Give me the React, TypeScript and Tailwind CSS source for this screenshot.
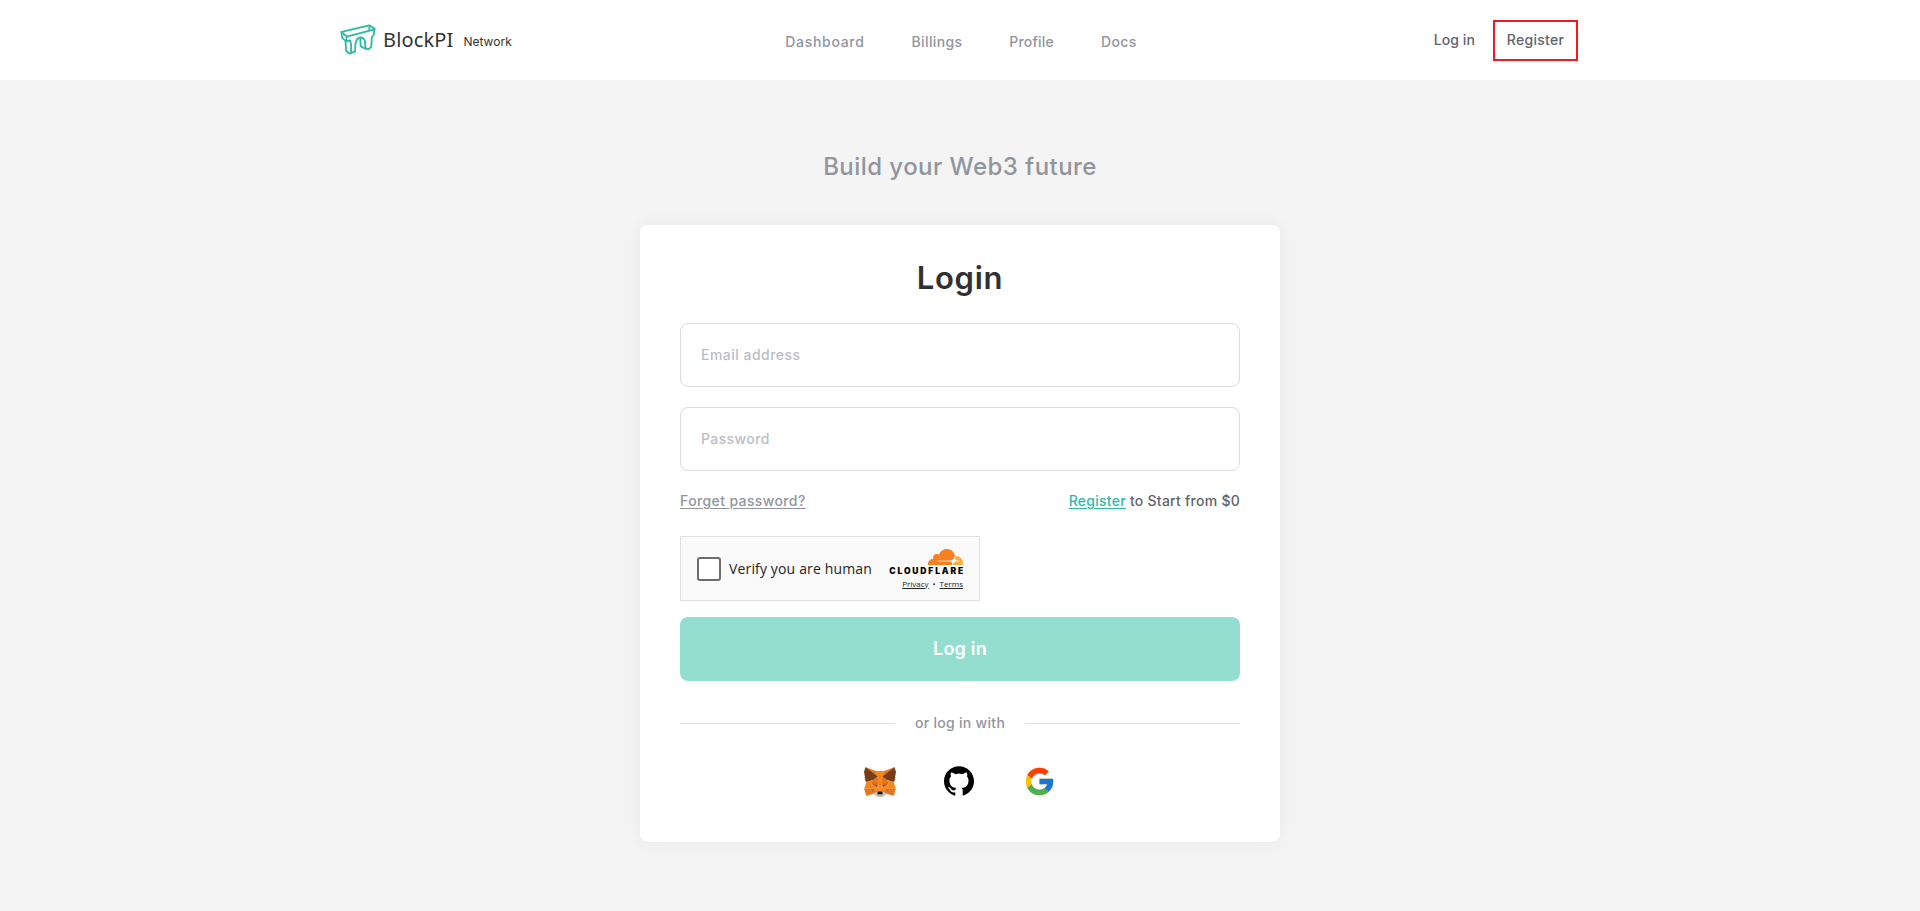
import { SiGithub } from "react-icons/si";
import { FcGoogle } from "react-icons/fc";

function BlockPiMark() {
  return (
    <svg viewBox="28 42 108 94" className="-mt-[2px] h-[31px] w-9" fill="none" stroke="#2cbba2" strokeWidth="5.5" strokeLinejoin="round" strokeLinecap="round">
      <path d="M32 66 L116 46 L132 56 L130 74 L124 82 L122 112 L113 119 L105 116 L103 95" />
      <path d="M32 66 L34 84 L44 93 L46 123 L56 132 L73 126 L74 104 Q77 84 89 83 Q100 82 103 95" />
      <path d="M32 66 L48 80 L132 58 M48 80 L46 94 L58 92 L61 104 L61 128" />
      <path d="M117 48 L116 60 M89 84 L90 109 L104 117" />
    </svg>
  );
}

function CloudflareMark() {
  return (
    <svg viewBox="0 6.56 24 10.87" className="h-4 w-[35px]">
      <path fill="#f6821f" d="M16.5088 16.8447c.1475-.5068.0908-.9707-.1553-1.3154-.2246-.3164-.6045-.499-1.0615-.5205l-8.6592-.1123a.1559.1559 0 0 1-.1333-.0713c-.0283-.042-.0351-.0986-.021-.1553.0278-.084.1123-.1484.2036-.1562l8.7359-.1123c1.0351-.0489 2.1601-.8868 2.5537-1.9136l.499-1.3013c.0215-.0561.0293-.1128.0147-.168-.5625-2.5463-2.835-4.4453-5.5499-4.4453-2.5039 0-4.6284 1.6177-5.3876 3.8614-.4927-.3658-1.1187-.5625-1.794-.499-1.2026.119-2.1665 1.083-2.2861 2.2856-.0283.31-.0069.6128.0635.894C1.5683 13.171 0 14.7754 0 16.752c0 .1748.0142.3515.0352.5273.0141.083.0844.1475.1689.1475h15.9814c.0909 0 .1758-.0645.2032-.1553l.12-.4268z" />
      <path fill="#fbad41" d="M19.2656 11.2813c-.0771 0-.1611 0-.2383.0112-.0566 0-.1054.0415-.127.0976l-.3378 1.1744c-.1475.5068-.0918.9707.1543 1.3164.2256.3164.6055.498 1.0625.5195l1.8437.1133c.0557 0 .1055.0263.1329.0703.0283.043.0351.1074.0214.1562-.0283.084-.1132.1485-.204.1553l-1.921.1123c-1.041.0488-2.1582.8867-2.5527 1.914l-.1406.3585c-.0283.0713.0215.1416.0986.1416h6.5977c.0771 0 .1474-.0489.169-.126.1122-.4082.1757-.837.1757-1.2803 0-2.6025-2.125-4.727-4.7344-4.727z" />
    </svg>
  );
}

const foxShapes: [string, string][] = [
  ["#e2761b", "274.1,35.5 174.6,109.4 193,65.8"],
  ["#e4761b", "44.4,35.5 143.1,110.1 125.6,65.8"],
  ["#e4761b", "238.3,206.8 211.8,247.4 268.5,263 284.8,207.7"],
  ["#e4761b", "33.9,207.7 50.1,263 106.8,247.4 80.3,206.8"],
  ["#e4761b", "103.6,138.2 87.8,162.1 144.1,164.6 142.1,104.1"],
  ["#e4761b", "214.9,138.2 175.9,103.4 174.6,164.6 230.8,162.1"],
  ["#e4761b", "106.8,247.4 140.6,230.9 111.4,208.1"],
  ["#e4761b", "177.9,230.9 211.8,247.4 207.1,208.1"],
  ["#d7c1b3", "211.8,247.4 177.9,230.9 180.6,253 180.3,262.3"],
  ["#d7c1b3", "106.8,247.4 138.3,262.3 138.1,253 140.6,230.9"],
  ["#233447", "138.8,193.5 110.6,185.2 130.5,176.1"],
  ["#233447", "179.7,193.5 188,176.1 208,185.2"],
  ["#cd6116", "106.8,247.4 111.6,206.8 80.3,207.7"],
  ["#cd6116", "207,206.8 211.8,247.4 238.3,207.7"],
  ["#cd6116", "230.8,162.1 174.6,164.6 179.8,193.5 188.1,176.1 208.1,185.2"],
  ["#cd6116", "110.6,185.2 130.6,176.1 138.8,193.5 144.1,164.6 87.8,162.1"],
  ["#e4751f", "87.8,162.1 111.4,208.1 110.6,185.2"],
  ["#e4751f", "208.1,185.2 207.1,208.1 230.8,162.1"],
  ["#e4751f", "144.1,164.6 138.8,193.5 145.4,227.6 146.9,182.7"],
  ["#e4751f", "174.6,164.6 171.9,182.6 173.1,227.6 179.8,193.5"],
  ["#f6851b", "179.8,193.5 173.1,227.6 177.9,230.9 207.1,208.1 208.1,185.2"],
  ["#f6851b", "110.6,185.2 111.4,208.1 140.6,230.9 145.4,227.6 138.8,193.5"],
  ["#c0ad9e", "180.3,262.3 180.6,253 178.1,250.8 140.4,250.8 138.1,253 138.3,262.3 106.8,247.4 117.8,256.4 140.1,271.9 178.4,271.9 200.8,256.4 211.8,247.4"],
  ["#161616", "177.9,230.9 173.1,227.6 145.4,227.6 140.6,230.9 138.1,253 140.4,250.8 178.1,250.8 180.6,253"],
  ["#763d16", "278.3,114.2 286.8,73.4 274.1,35.5 177.9,106.9 214.9,138.2 267.2,153.5 278.8,140 273.8,136.4 281.8,129.1 275.6,124.3 283.6,118.2"],
  ["#763d16", "31.8,73.4 40.3,114.2 34.9,118.2 42.9,124.3 36.8,129.1 44.8,136.4 39.8,140 51.3,153.5 103.6,138.2 140.6,106.9 44.4,35.5"],
  ["#f6851b", "267.2,153.5 214.9,138.2 230.8,162.1 207.1,208.1 238.3,207.7 284.8,207.7"],
  ["#f6851b", "103.6,138.2 51.3,153.5 33.9,207.7 80.3,207.7 111.4,208.1 87.8,162.1"],
  ["#f6851b", "174.6,164.6 177.9,106.9 193.1,65.8 125.6,65.8 140.6,106.9 144.1,164.6 145.3,182.8 145.4,227.6 173.1,227.6 173.3,182.8"],
];

function MetaMaskFox() {
  return (
    <svg viewBox="31.8 35.5 255 236.4" className="h-[30px] w-8">
      {foxShapes.map(([fill, points], i) => (
        <polygon key={i} fill={fill} stroke={fill} strokeWidth="1" points={points} />
      ))}
    </svg>
  );
}

function Header() {
  return (
    <header className="h-20 bg-white">
      <div className="mx-auto grid h-full w-[1240px] grid-cols-[1fr_auto_1fr] items-center">
        <a className="flex items-center font-normal text-[#333]">
          <BlockPiMark />
          <span className="ml-[7px] font-['Noto_Sans',sans-serif] text-[20px] leading-8 tracking-[0.15px]">BlockPI</span>
          <span className="ml-[10px] mt-1 text-xs">Network</span>
        </a>
        <nav className="mt-[3px] flex gap-[47px] pl-[2px] text-[#92959e]">
          <a className="tracking-[0.7px]">Dashboard</a>
          <a className="tracking-[0.35px]">Billings</a>
          <a className="tracking-[0.2px]">Profile</a>
          <a className="tracking-[0.4px]">Docs</a>
        </nav>
        <div className="mr-[2px] flex items-center justify-end gap-[18px] text-[#60636c]">
          <a className="tracking-[0.1px]">Log in</a>
          <a className="flex h-[41px] w-[85px] items-center justify-center border-2 border-[#ed1c24] tracking-[0.3px]">Register</a>
        </div>
      </div>
    </header>
  );
}

function HumanCheck() {
  return (
    <div className="mt-6 flex h-[65px] w-[300px] shrink-0 items-center border border-[#e0e0e0] bg-[#fafafa] pl-4 pr-4 font-['Open_Sans',sans-serif] font-normal text-[#232323]">
      <span className="size-6 shrink-0 rounded-[3px] border-2 border-[#6d6d6d] bg-white" />
      <span className="ml-2 whitespace-nowrap text-sm tracking-[0.15px]">Verify you are human</span>
      <div className="ml-auto flex flex-col items-end">
        <CloudflareMark />
        <span className="-mr-[2px] mt-[1px] whitespace-nowrap font-['Inter',sans-serif] text-[8.5px] font-black leading-[10px] tracking-[1.85px] text-black">CLOUDFLARE</span>
        <div className="mt-[3px] flex gap-1 text-[8px] leading-[10px]">
          <a className="underline">Privacy</a>
          <span>•</span>
          <a className="underline">Terms</a>
        </div>
      </div>
    </div>
  );
}

export default function App() {
  return (
    <div className="min-h-[911px] bg-[#f4f4f4] font-['Inter',sans-serif] text-sm font-medium">
      <Header />
      <main className="flex flex-col items-center">
        <p className="mt-[69px] text-2xl leading-9 tracking-[0.45px] text-[#92959e]">Build your Web3 future</p>
        <section className="mt-10 flex h-[617px] w-[640px] flex-col rounded-lg bg-white px-10 pt-8 shadow-[0_0_20px_rgba(0,0,0,0.05)]">
          <h1 className="text-center text-[31px] font-semibold leading-[42px] tracking-[0.7px] text-[#303133]">Login</h1>
          <input placeholder="Email address" className="mt-6 h-16 shrink-0 rounded-lg border border-[#dcdcdf] px-5 pb-[2px] tracking-[0.48px] outline-none placeholder:text-[#babdc5]" />
          <input placeholder="Password" className="mt-5 h-16 shrink-0 rounded-lg border border-[#dcdcdf] px-5 pb-[2px] tracking-[0.4px] outline-none placeholder:text-[#babdc5]" />
          <div className="mt-[19px] flex justify-between leading-[22px]">
            <a className="tracking-[0.38px] text-[#92959e] underline underline-offset-2">Forget password?</a>
            <p className="tracking-[0.26px] text-[#60636c]">
              <a className="text-[#2cbba2] underline underline-offset-2">Register</a> to Start from $0
            </p>
          </div>
          <HumanCheck />
          <button className="mt-4 h-16 shrink-0 rounded-lg bg-[#93dece] text-lg font-semibold tracking-[0.2px] text-white">Log in</button>
          <div className="mt-8 flex items-center gap-5 text-[#92959e]">
            <span className="h-px flex-1 bg-[#dcdcdf]" />
            <span className="leading-5 tracking-[0.3px]">or log in with</span>
            <span className="h-px flex-1 bg-[#dcdcdf]" />
          </div>
          <div className="mt-8 flex items-center justify-center gap-12 text-black">
            <MetaMaskFox />
            <SiGithub className="mb-[2px] size-[30px]" />
            <FcGoogle className="ml-[1px] size-[33px]" />
          </div>
        </section>
      </main>
    </div>
  );
}
